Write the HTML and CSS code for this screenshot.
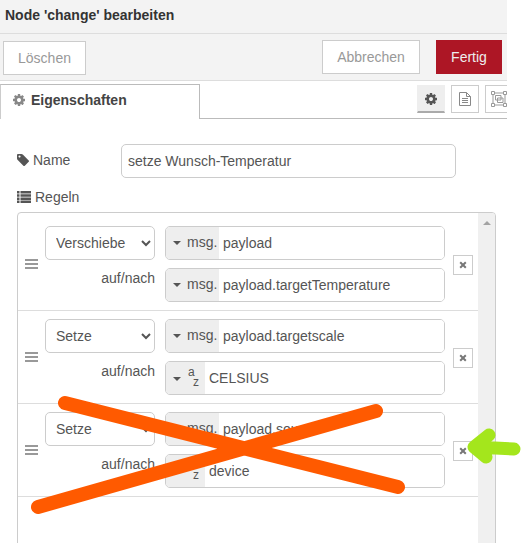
FILE: index.html
```html
<!DOCTYPE html>
<html lang="de">
<head>
<meta charset="utf-8">
<title>Node 'change' bearbeiten</title>
<link rel="stylesheet" href="styles.css">
</head>
<body>
<div class="tray">
  <header class="tray-title">Node 'change' bearbeiten</header>
  <div class="toolbar">
    <button class="btn">Löschen</button>
    <div class="toolbar-right">
      <button class="btn btn-cancel">Abbrechen</button>
      <button class="btn btn-primary">Fertig</button>
    </div>
  </div>
  <div class="tabs">
    <div class="tab">
      <svg class="ico-cog" viewBox="0 0 1536 1536"><path d="M1024 768q0-106-75-181t-181-75-181 75-75 181 75 181 181 75 181-75 75-181zm512-109v222q0 12-8 23t-20 13l-185 28q-19 54-39 91 35 50 107 138 10 12 10 25t-9 23q-27 37-99 108t-94 71q-12 0-26-9l-138-108q-44 23-91 38-16 136-29 186-7 28-36 28h-222q-14 0-24.500-8.500t-11.500-21.500l-28-184q-49-16-90-37l-141 107q-10 9-25 9-14 0-25-11-126-114-165-168-7-10-7-23 0-12 8-23 15-21 51-66.500t54-70.500q-27-50-41-99l-183-27q-13-2-21-12.500t-8-23.500v-222q0-12 8-23t19-13l186-28q14-46 39-92-40-57-107-138-10-12-10-24 0-10 9-23 26-36 98.500-107.500t94.500-71.500q13 0 26 10l138 107q44-23 91-38 16-136 29-186 7-28 36-28h222q14 0 24.500 8.500t11.500 21.500l28 184q49 16 90 37l142-107q9-9 24-9 13 0 25 10 129 119 165 170 7 8 7 22 0 12-8 23-15 21-51 66.500t-54 70.500q26 50 41 98l183 28q13 2 21 12.500t8 23.500z"/></svg>
      <span>Eigenschaften</span>
    </div>
    <div class="tab-links">
      <div class="tab-link is-active"><svg class="ico-cog-dark" viewBox="0 0 1536 1536"><path d="M1024 768q0-106-75-181t-181-75-181 75-75 181 75 181 181 75 181-75 75-181zm512-109v222q0 12-8 23t-20 13l-185 28q-19 54-39 91 35 50 107 138 10 12 10 25t-9 23q-27 37-99 108t-94 71q-12 0-26-9l-138-108q-44 23-91 38-16 136-29 186-7 28-36 28h-222q-14 0-24.500-8.500t-11.500-21.500l-28-184q-49-16-90-37l-141 107q-10 9-25 9-14 0-25-11-126-114-165-168-7-10-7-23 0-12 8-23 15-21 51-66.500t54-70.500q-27-50-41-99l-183-27q-13-2-21-12.500t-8-23.500v-222q0-12 8-23t19-13l186-28q14-46 39-92-40-57-107-138-10-12-10-24 0-10 9-23 26-36 98.500-107.500t94.500-71.500q13 0 26 10l138 107q44-23 91-38 16-136 29-186 7-28 36-28h222q14 0 24.500 8.500t11.500 21.500l28 184q49 16 90 37l142-107q9-9 24-9 13 0 25 10 129 119 165 170 7 8 7 22 0 12-8 23-15 21-51 66.500t-54 70.500q26 50 41 98l183 28q13 2 21 12.500t8 23.500z"/></svg></div>
      <div class="tab-link"><svg class="ico-doc" viewBox="0 0 12 14"><path d="M.5.500h7l4 4v9H.500zM7.500.500v4h4M3 6.500h6M3 8.500h6M3 10.500h6"/></svg></div>
      <div class="tab-link"><svg class="ico-group" viewBox="0 0 16 16"><path d="M2 2h12v12H2zM4.500 4.500h5.500v4.500H4.500zM6.500 7h5.500v4.500H6.500z"/><path class="ico-group-nodes" d="M.500.500h3v3h-3zM12.500.500h3v3h-3zM.500 12.500h3v3h-3zM12.500 12.500h3v3h-3z"/></svg></div>
    </div>
  </div>
  <div class="form">
    <div class="name-row">
      <label class="label label-name">
        <svg class="ico-tag" viewBox="0 0 1515 1515"><path d="M448 320q0-53-37.500-90.500t-90.500-37.500-90.500 37.500-37.500 90.500 37.500 90.500 90.500 37.500 90.500-37.500 37.500-90.500zm1067 576q0 53-37 90l-491 492q-39 37-91 37-53 0-90-37l-715-716q-38-37-64.500-101t-26.500-117v-416q0-52 38-90t90-38h416q53 0 117 26.500t102 64.500l715 714q37 39 37 91z"/></svg>
        Name
      </label>
      <input class="input name-input" value="setze Wunsch-Temperatur">
    </div>
    <div class="label label-rules">
      <svg class="ico-list" viewBox="0 0 14 12"><path d="M0 0h2.500v2.500H0zM3.500 0H14v2.500H3.500zM0 3.200h2.500v2.500H0zM3.500 3.200H14v2.500H3.500zM0 6.400h2.500v2.500H0zM3.500 6.400H14v2.500H3.500zM0 9.500h2.500V12H0zM3.500 9.500H14V12H3.500z"/></svg>
      Regeln
    </div>
    <div class="rule-box">
      <div class="rules">

        <div class="rule rule-first">
          <div class="grip"><i></i><i></i><i></i></div>
          <div class="rule-fields">
            <div class="line">
              <select class="select"><option>Verschiebe</option></select>
              <div class="typed"><span class="type-btn"><b class="caret"></b>msg.</span><input class="typed-input" value="payload"></div>
            </div>
            <div class="line">
              <span class="to-label">auf/nach</span>
              <div class="typed"><span class="type-btn"><b class="caret"></b>msg.</span><input class="typed-input" value="payload.targetTemperature"></div>
            </div>
          </div>
          <button class="del"><svg viewBox="0 0 8 8"><path d="M1.200 1.200l5.600 5.600M6.800 1.200L1.200 6.800"/></svg></button>
        </div>

        <div class="rule">
          <div class="grip"><i></i><i></i><i></i></div>
          <div class="rule-fields">
            <div class="line">
              <select class="select"><option>Setze</option></select>
              <div class="typed"><span class="type-btn"><b class="caret"></b>msg.</span><input class="typed-input" value="payload.targetscale"></div>
            </div>
            <div class="line">
              <span class="to-label">auf/nach</span>
              <div class="typed"><span class="type-btn type-btn-str"><b class="caret"></b><span class="az"><sup>a</sup><sub>z</sub></span></span><input class="typed-input" value="CELSIUS"></div>
            </div>
          </div>
          <button class="del"><svg viewBox="0 0 8 8"><path d="M1.200 1.200l5.600 5.600M6.800 1.200L1.200 6.800"/></svg></button>
        </div>

        <div class="rule">
          <div class="grip"><i></i><i></i><i></i></div>
          <div class="rule-fields">
            <div class="line">
              <select class="select"><option>Setze</option></select>
              <div class="typed"><span class="type-btn"><b class="caret"></b>msg.</span><input class="typed-input" value="payload.source"></div>
            </div>
            <div class="line">
              <span class="to-label">auf/nach</span>
              <div class="typed"><span class="type-btn type-btn-str"><b class="caret"></b><span class="az"><sup>a</sup><sub>z</sub></span></span><input class="typed-input" value="device"></div>
            </div>
          </div>
          <button class="del"><svg viewBox="0 0 8 8"><path d="M1.200 1.200l5.600 5.600M6.800 1.200L1.200 6.800"/></svg></button>
        </div>

      </div>
      <div class="scrollbar"><b class="scroll-up"></b></div>
    </div>
  </div>
</div>
<svg class="markup" viewBox="0 0 522 543" width="522" height="543">
  <path class="cross" d="M65 403L398 487M38 507L376 411"/>
  <path class="arrow" d="M514 449L475 447M489 435L474 447L486 457"/>
</svg>
</body>
</html>
```
FILE: styles.css
```css
* { box-sizing: border-box; }
html, body { margin: 0; height: 100%; }
body {
  position: relative;
  overflow: hidden;
  background: #fff;
  color: #555;
  font: 14px/20px "Liberation Sans", Arial, sans-serif;
}
.tray { width: 507px; height: 543px; overflow: hidden; }
.tray-title {
  height: 34px;
  padding: 5px 5px 0;
  background: #f3f3f3;
  border-bottom: 1px solid #ddd;
  color: #333;
  font-size: 14px;
  font-weight: bold;
}
.toolbar {
  height: 47px;
  display: flex;
  justify-content: space-between;
  padding: 7px 5px 0 3px;
  background: #f3f3f3;
  border-bottom: 1px solid #ddd;
}
.toolbar-right { display: flex; gap: 16px; margin-top: -1px; }
.btn {
  width: 83px;
  height: 34px;
  padding: 0;
  background: #fff;
  border: 1px solid #ccc;
  color: #999;
  font: inherit;
}
.btn-cancel { width: 98px; }
.btn-primary { width: 66px; background: #ad1625; border-color: #ad1625; color: #eee; }
.tabs {
  height: 35px;
  display: flex;
  justify-content: space-between;
  margin-top: 3px;
  border-bottom: 1px solid #bbb;
}
.tab {
  width: 200px;
  height: 35px;
  display: flex;
  align-items: center;
  gap: 6px;
  padding: 0 0 4px 12px;
  background: #fff;
  border: 1px solid #bbb;
  border-width: 1px 1px 0 1px;
  border-left-color: #ccc;
  color: #444;
  font-size: 14px;
  font-weight: bold;
}
.ico-cog { width: 12px; height: 12px; fill: #888; }
.tab-links { display: flex; gap: 6px; margin-right: -6px; padding-top: 1px; }
.tab-link {
  width: 28px;
  height: 28px;
  display: flex;
  align-items: center;
  justify-content: center;
  background: #fff;
  border: 1px solid #ccc;
}
.tab-link.is-active { background: #eee; border-color: #eee; border-bottom: 2px solid #aaa; }
.ico-cog-dark { width: 12px; height: 12px; fill: #555; }
.ico-doc { width: 12px; height: 14px; fill: none; stroke: #888; stroke-width: 1; }
.ico-group { width: 16px; height: 16px; fill: none; stroke: #999; stroke-width: 1; }
.ico-group-nodes { fill: #fff; }
.form { padding: 25px 0 0 17px; }
.name-row { display: flex; align-items: center; height: 34px; }
.label { display: flex; align-items: center; gap: 4px; }
.label-name { width: 104px; margin-top: -3px; }
.ico-tag { width: 12px; height: 12px; fill: #555; }
.input {
  height: 34px;
  padding: 0 6px;
  background: #fff;
  border: 1px solid #ccc;
  border-radius: 5px;
  color: #555;
  font: inherit;
  outline: 0;
}
.name-input { width: 335px; }
.label-rules { height: 20px; margin-top: 9px; }
.ico-list { width: 14px; height: 12px; fill: #555; }
.rule-box {
  width: 479px;
  height: 400px;
  display: flex;
  margin-top: 5px;
  background: #fff;
  border: 1px solid #ccc;
  border-radius: 4px;
  overflow: hidden;
}
.rules { flex: 1; }
.rule {
  height: 93px;
  display: flex;
  align-items: center;
  padding: 0 0 0 7px;
  border-bottom: 1px solid #ddd;
}
.rule-first { height: 98px; padding-top: 5px; }
.grip { width: 13px; margin-right: 7px; display: flex; flex-direction: column; gap: 2px; }
.grip i { display: block; height: 2px; background: #999; }
.rule-fields { width: 400px; display: flex; flex-direction: column; gap: 8px; }
.line { display: flex; gap: 10px; align-items: flex-start; }
.select {
  width: 110px;
  height: 34px;
  padding: 0 6px;
  background: #fff;
  border: 1px solid #ccc;
  border-radius: 5px;
  color: #555;
  font: inherit;
}
.to-label { width: 110px; text-align: right; line-height: 20px; }
.typed {
  width: 280px;
  height: 34px;
  display: flex;
  border: 1px solid #ccc;
  border-radius: 5px;
  overflow: hidden;
}
.type-btn {
  width: 53px;
  flex: none;
  display: flex;
  align-items: center;
  gap: 6px;
  padding: 0 0 2px 7px;
  background: #eee;
}
.type-btn-str { width: 39px; padding-bottom: 0; }
.caret {
  width: 0;
  height: 0;
  margin-top: 1px;
  border: 4px solid transparent;
  border-top: 4px solid #555;
  border-bottom: 0;
}
.az { display: flex; flex-direction: column; font-size: 12px; line-height: 10px; padding-left: 1px; margin-top: -2px; }
.az sup, .az sub { font-size: 12px; line-height: 10px; vertical-align: baseline; }
.az sub { margin-left: 5px; }
.typed-input {
  flex: 1;
  min-width: 0;
  padding: 0 4px;
  border: 0;
  color: #555;
  font: inherit;
  outline: 0;
}
.del {
  width: 20px;
  height: 20px;
  margin: 2px 0 0 8px;
  padding: 0;
  display: flex;
  align-items: center;
  justify-content: center;
  background: #fff;
  border: 1px solid #ccc;
}
.del svg { width: 8px; height: 8px; fill: none; stroke: #777; stroke-width: 2; }
.scrollbar { width: 17px; flex: none; background: #f0f0f0; display: flex; justify-content: center; padding-top: 8px; }
.scroll-up {
  width: 0;
  height: 0;
  border: 4px solid transparent;
  border-bottom: 4px solid #a3a3a3;
  border-top: 0;
}
.markup { position: absolute; top: 0; left: 0; fill: none; stroke-linecap: round; stroke-linejoin: round; }
.cross { stroke: #ff5a00; stroke-width: 14; }
.arrow { stroke: #a4e61c; stroke-width: 13; }
```
